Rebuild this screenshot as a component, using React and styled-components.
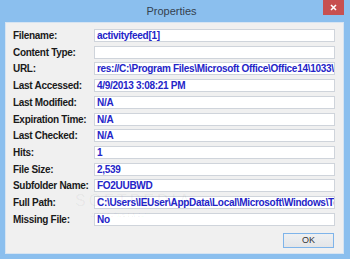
import React from "react";
import styled, { createGlobalStyle } from "styled-components";

const Global = createGlobalStyle`
  html, body { margin: 0; padding: 0; background: #8cc0ee; }
  body { font-family: "Liberation Sans", Arial, sans-serif; }
`;

const Window = styled.div`
  width: 350px;
  height: 259px;
  box-sizing: border-box;
  background: #8bbfee;
  padding: 0 6px 5px 5px;
  display: flex;
  flex-direction: column;
  position: relative;
  overflow: hidden;
`;

const TitleBar = styled.div`
  height: 22px;
  flex: none;
  display: flex;
  align-items: center;
  justify-content: center;
  position: relative;
`;

const Title = styled.span`
  font-family: "Liberation Sans", Arial, sans-serif;
  font-size: 11px;
  color: #34414f;
  margin-top: -1px;
  margin-left: -6px;
`;

const CloseButton = styled.div`
  position: absolute;
  top: 0;
  right: 0;
  width: 21px;
  height: 15px;
  background: #c75050;
  display: flex;
  align-items: center;
  justify-content: center;
`;

const Client = styled.div`
  flex: 1;
  background: #f0f0f0;
  border: 1px solid #d6e4f2;
  display: flex;
  flex-direction: column;
  padding: 6px 8px 0 7px;
  position: relative;
`;

const Grid = styled.div`
  display: grid;
  grid-template-columns: 81px 241px;
  grid-auto-rows: 13px;
  row-gap: 3.73px;
`;

const Label = styled.div`
  font-family: "Liberation Sans", Arial, sans-serif;
  font-weight: bold;
  font-size: 10px;
  letter-spacing: -0.3px;
  color: #1a1a1a;
  line-height: 13px;
  white-space: nowrap;
`;

const Field = styled.div`
  box-sizing: border-box;
  height: 13px;
  background: #ffffff;
  border: 1px solid #cfd4db;
  padding-left: 2px;
  font-family: "Liberation Sans", Arial, sans-serif;
  font-weight: bold;
  font-size: 10px;
  letter-spacing: -0.3px;
  line-height: 11px;
  color: #2424c8;
  white-space: nowrap;
  overflow: hidden;
`;

const Footer = styled.div`
  display: flex;
  justify-content: flex-end;
  padding-top: 7px;
  padding-right: 1px;
`;

const OkButton = styled.div`
  box-sizing: border-box;
  width: 51px;
  height: 15px;
  border: 1px solid #7eb4ea;
  background: linear-gradient(#eef0f2, #e3e5e8);
  display: flex;
  align-items: center;
  justify-content: center;
  font-family: "Liberation Sans", Arial, sans-serif;
  font-size: 9px;
  color: #333;
`;

const Watermark = styled.div`
  position: absolute;
  left: ${(p) => p.$left}px;
  top: ${(p) => p.$top}px;
  font-family: "Liberation Sans", Arial, sans-serif;
  font-size: ${(p) => p.$size}px;
  letter-spacing: ${(p) => p.$spacing}px;
  color: rgba(0, 0, 0, 0.05);
  pointer-events: none;
  white-space: nowrap;
`;

const rows = [
  ["Filename:", "activityfeed[1]"],
  ["Content Type:", ""],
  ["URL:", "res://C:\\Program Files\\Microsoft Office\\Office14\\1033\\"],
  ["Last Accessed:", "4/9/2013 3:08:21 PM"],
  ["Last Modified:", "N/A"],
  ["Expiration Time:", "N/A"],
  ["Last Checked:", "N/A"],
  ["Hits:", "1"],
  ["File Size:", "2,539"],
  ["Subfolder Name:", "FO2UUBWD"],
  ["Full Path:", "C:\\Users\\IEUser\\AppData\\Local\\Microsoft\\Windows\\Temporary Internet Files"],
  ["Missing File:", "No"],
];

export default function App() {
  return (
    <>
      <Global />
      <Window>
        <TitleBar>
          <Title>Properties</Title>
          <CloseButton>
            <svg width="7" height="7" viewBox="0 0 7 7">
              <path d="M1 1 L6 6 M6 1 L1 6" stroke="#ffffff" strokeWidth="1.6" />
            </svg>
          </CloseButton>
        </TitleBar>
        <Client>
          <Grid>
            {rows.map(([label, value]) => (
              <React.Fragment key={label}>
                <Label>{label}</Label>
                <Field>{value}</Field>
              </React.Fragment>
            ))}
          </Grid>
          <Footer>
            <OkButton>OK</OkButton>
          </Footer>
          <Watermark $left={69} $top={169} $size={16} $spacing={3}>SOFTPEDIA</Watermark>
          <Watermark $left={84} $top={188} $size={7} $spacing={0}>www.softpedia.com</Watermark>
        </Client>
      </Window>
    </>
  );
}
